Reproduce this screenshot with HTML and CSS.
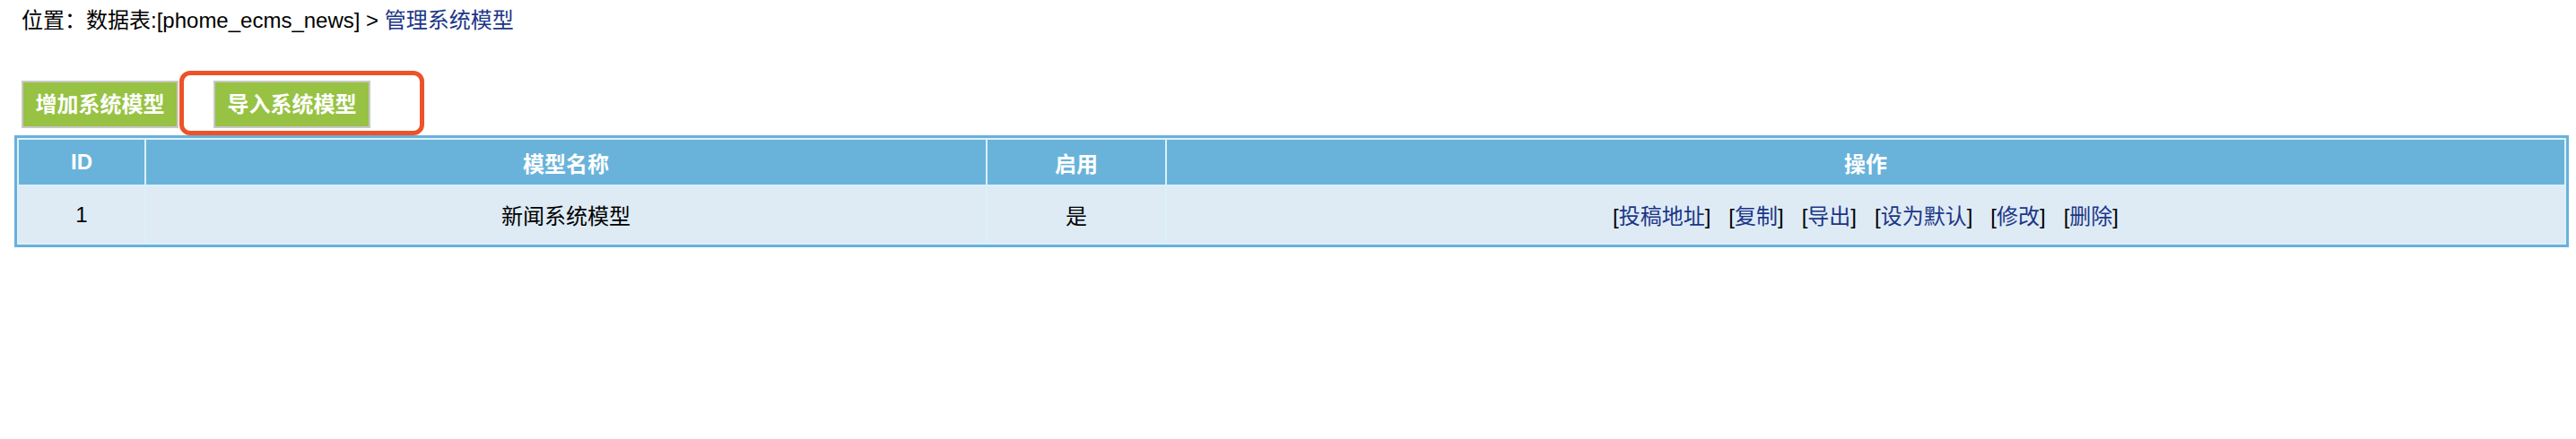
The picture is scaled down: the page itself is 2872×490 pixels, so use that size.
FILE: index.html
```html
<!DOCTYPE html>
<html lang="zh-CN">
<head>
<meta charset="utf-8">
<title>管理系统模型</title>
<link rel="stylesheet" href="styles.css">
</head>
<body>
<div class="page">
  <div class="crumb">位置：数据表:[phome_ecms_news] &gt; <a href="#" class="link">管理系统模型</a></div>
  <div class="toolbar">
    <button class="btn" type="button">增加系统模型</button>
    <span class="mark-wrap">
      <button class="btn" type="button">导入系统模型</button>
      <span class="mark"></span>
    </span>
  </div>
  <table class="grid">
    <colgroup>
      <col class="c-id"><col class="c-name"><col class="c-on"><col class="c-op">
    </colgroup>
    <thead>
      <tr class="head">
        <th>ID</th><th>模型名称</th><th>启用</th><th>操作</th>
      </tr>
    </thead>
    <tbody>
      <tr class="row">
        <td>1</td>
        <td>新闻系统模型</td>
        <td>是</td>
        <td>
          <span class="ops">
            <span>[<a href="#" class="link">投稿地址</a>]</span>
            <span>[<a href="#" class="link">复制</a>]</span>
            <span>[<a href="#" class="link">导出</a>]</span>
            <span>[<a href="#" class="link">设为默认</a>]</span>
            <span>[<a href="#" class="link">修改</a>]</span>
            <span>[<a href="#" class="link">删除</a>]</span>
          </span>
        </td>
      </tr>
    </tbody>
  </table>
</div>
</body>
</html>
```
FILE: styles.css
```css
html, body {
  margin: 0;
  padding: 0;
  background: #ffffff;
}
body {
  font-family: "Liberation Sans", "Noto Sans CJK SC", sans-serif;
  font-size: 24px;
  color: #000;
}
.page {
  padding: 8px 8px 0 16px;
}
.crumb {
  padding-left: 8px;
  line-height: 30px;
  height: 30px;
  white-space: nowrap;
}
.link {
  color: #1c3687;
  text-decoration: none;
}
.toolbar {
  margin-top: 52px;
  padding-left: 8px;
  display: flex;
  gap: 39px;
  align-items: flex-start;
}
.btn {
  box-sizing: border-box;
  width: 175px;
  height: 53px;
  margin: 0;
  padding: 0;
  border: 2px solid #c8c8c8;
  background: #97c243;
  color: #ffffff;
  font-family: "Liberation Sans", "Noto Sans CJK SC", sans-serif;
  font-size: 24px;
  font-weight: bold;
  line-height: 49px;
  text-align: center;
  cursor: pointer;
}
.mark-wrap {
  position: relative;
  display: block;
  height: 53px;
}
.mark {
  position: absolute;
  left: -38px;
  top: -11px;
  width: 273px;
  height: 72px;
  box-sizing: border-box;
  border: 5px solid #ee5228;
  border-radius: 12px;
  pointer-events: none;
}
.grid {
  margin-top: 8px;
  width: 100%;
  table-layout: fixed;
  border: 3px solid #68b2da;
  border-spacing: 2px;
  background: #dcf0fb;
}
.c-id { width: 140px; }
.c-name { width: 936px; }
.c-on { width: 198px; }
.grid th, .grid td {
  padding: 0;
  text-align: center;
  white-space: nowrap;
}
.head th {
  height: 50px;
  background: #69b3da;
  color: #ffffff;
  font-weight: bold;
}
.row td {
  height: 63px;
  background: #deebf5;
}
.ops {
  display: inline-flex;
  gap: 20px;
}
```
